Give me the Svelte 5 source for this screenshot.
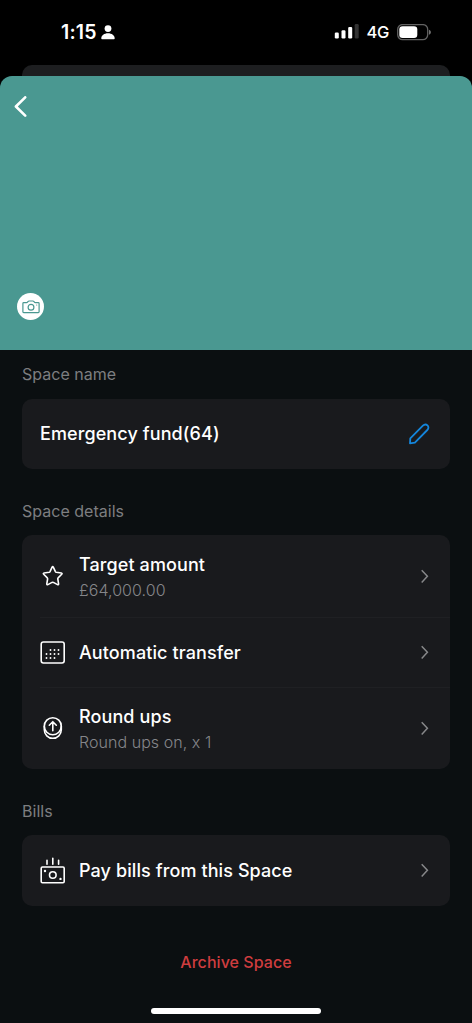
<script lang="ts">
    let spaceName = 'Emergency fund(64)';

    const details = [
        { icon: 'star', title: 'Target amount', subtitle: '£64,000.00' },
        { icon: 'calendar', title: 'Automatic transfer', subtitle: '' },
        { icon: 'coin', title: 'Round ups', subtitle: 'Round ups on, x 1' }
    ];

    const bills = [{ icon: 'bill', title: 'Pay bills from this Space', subtitle: '' }];

    const dots = [
        [10.5, 12], [14.5, 12], [18.5, 12],
        [6.5, 16], [10.5, 16], [14.5, 16], [18.5, 16],
        [6.5, 20], [10.5, 20], [14.5, 20]
    ];
</script>

{#snippet icon(name)}
    <svg class="icon" width="26" height="28" viewBox="0 0 26 28">
        {#if name === 'star'}
            <path d="M12.100 5.100Q12.700 4 13.300 5.100L15.400 9.600Q15.700 10.200 16.300 10.300L21.300 11Q22.600 11.300 21.700 12.300L18.100 15.900Q17.700 16.400 17.800 17L18.600 21.800Q18.700 23.200 17.500 22.600L13.400 20.400Q12.700 20.100 12 20.400L7.900 22.600Q6.700 23.200 6.800 21.800L7.600 17Q7.700 16.400 7.300 15.900L3.700 12.300Q2.800 11.300 4.100 11L9.100 10.300Q9.700 10.200 10 9.600Z" />
        {:else if name === 'calendar'}
            <rect x="1.200" y="4" width="23" height="21" rx="2.200" />
            {#each dots as [x, y]}
                <circle class="solid" cx={x} cy={y} r="0.95" />
            {/each}
        {:else if name === 'coin'}
            <circle cx="12.800" cy="12.200" r="8.500" />
            <path d="M4.300 12.200v3.600c0 4.700 3.800 8.500 8.500 8.500s8.500-3.800 8.500-8.500v-3.600" />
            <path d="M12.800 16.800V7.800M9.300 11.200 12.800 7.700l3.500 3.500" />
        {:else if name === 'bill'}
            <rect x="1.200" y="11" width="23" height="15.800" rx="1.200" />
            <circle cx="12.800" cy="19" r="3.300" />
            <circle class="solid" cx="5" cy="15" r="1.200" />
            <circle class="solid" cx="20.500" cy="22.900" r="1.200" />
            <path d="M7 4.300v3.900M12.800 2.200v6M18.600 4.300v3.900" />
        {/if}
    </svg>
{/snippet}

{#snippet row(item)}
    <button class="row {item.subtitle ? 'tall' : ''}">
        {@render icon(item.icon)}
        <div class="text">
            <span class="title">{item.title}</span>
            {#if item.subtitle}
                <span class="subtitle">{item.subtitle}</span>
            {/if}
        </div>
        <svg class="chevron" width="10" height="16" viewBox="0 0 10 16">
            <path d="M1.700 2.200 7.400 8.300 1.700 14.400" />
        </svg>
    </button>
{/snippet}

<div class="screen">
    <div class="status">
        <span class="time">1:15</span>
        <svg class="person" width="14" height="15" viewBox="0 0 14 15">
            <circle cx="7" cy="3.600" r="3.400" />
            <path d="M.3 13.200C.3 10.500 3.200 8.300 7 8.300s6.700 2.200 6.700 4.900c0 .6-.4 1-1 1H1.300c-.6 0-1-.4-1-1Z" />
        </svg>
        <div class="signals">
            <svg width="25" height="16" viewBox="0 0 25 16">
                <rect x=".8" y="8.500" width="4" height="6" rx="1.200" />
                <rect x="7.500" y="6.200" width="4" height="8.300" rx="1.200" />
                <rect x="14.200" y="2.900" width="4" height="11.600" rx="1.200" />
                <rect class="dim" x="20.700" y="0" width="4" height="14.500" rx="1.200" />
            </svg>
            <span class="network">4G</span>
            <svg width="35" height="17" viewBox="0 0 35 17">
                <rect class="shell" x=".7" y=".6" width="30" height="15" rx="4.800" />
                <rect x="2.300" y="2.200" width="18" height="11.800" rx="3.300" />
                <path class="tip" d="M32 5.700v5c1.200-.4 1.900-1.300 1.900-2.500S33.200 6.100 32 5.700Z" />
            </svg>
        </div>
    </div>

    <div class="behind"></div>

    <main class="sheet">
        <header class="hero">
            <button class="back" aria-label="Back">
                <svg width="14" height="22" viewBox="0 0 14 22">
                    <path d="M12.200 1.300 2.900 10.500l9.300 9.200" />
                </svg>
            </button>
            <button class="camera" aria-label="Change image">
                <svg width="18" height="14" viewBox="0 0 18 14">
                    <path d="M1.700 2.700H4.500Q5.200 2.700 5.700 1.900 6.300 1 7.200 1h3.500q.9 0 1.500.9.500.8 1.200.8h2.900c.5 0 .8.3.8.8v8.300c0 .5-.3.800-.8.800H1.700c-.5 0-.8-.3-.8-.8V3.500c0-.5.3-.8.8-.8Z" />
                    <circle cx="9" cy="7.200" r="2.900" />
                    <circle class="lamp" cx="14.700" cy="5" r=".6" />
                </svg>
            </button>
        </header>

        <h2>Space name</h2>
        <section class="card name">
            <span class="title">{spaceName}</span>
            <svg class="pencil" width="22" height="22" viewBox="0 0 22 22">
                <path d="M2 20.300 2.300 15.300 14.900 2.700C16.300 1.300 18.200 1.200 19.500 2.400s1.200 3.200-.2 4.600L6.900 19.600Z" />
            </svg>
        </section>

        <h2>Space details</h2>
        <section class="card">
            {#each details as item}
                {@render row(item)}
            {/each}
        </section>

        <h2>Bills</h2>
        <section class="card">
            {#each bills as item}
                {@render row(item)}
            {/each}
        </section>

        <button class="archive">Archive Space</button>
        <div class="home"></div>
    </main>
</div>

<style>
    :global(body) {
        margin: 0;
        background-color: #000;
    }

    button {
        margin: 0;
        padding: 0;
        border: none;
        background: none;
        font: inherit;
        color: inherit;
        text-align: left;
    }

    svg {
        display: block;
        flex-shrink: 0;
    }

    .screen {
        display: flex;
        flex-direction: column;
        width: 472px;
        height: 1023px;
        overflow: hidden;
        background-color: #000;
        font-family: Inter, "Liberation Sans", sans-serif;
        color: #fff;
    }

    .status {
        display: flex;
        align-items: center;
        box-sizing: border-box;
        height: 64px;
        margin-bottom: 1px;
        padding: 0 40px 0 61px;
        fill: #fff;
    }

    .time {
        font-size: 19.5px;
        font-weight: 600;
        letter-spacing: 0.2px;
    }

    .person {
        margin-left: 4.5px;
    }

    .signals {
        display: flex;
        align-items: center;
        margin-left: auto;
    }

    .network {
        margin: 0 8px 0 7px;
        font-size: 16.5px;
        font-weight: 500;
        letter-spacing: -0.3px;
    }

    .dim {
        fill: #323232;
    }

    .shell {
        fill: none;
        stroke: #626262;
        stroke-width: 1.3;
    }

    .tip {
        fill: #727272;
    }

    .behind {
        flex-shrink: 0;
        height: 11px;
        margin: 0 22px;
        border-radius: 10px 10px 0 0;
        background-color: #1d1e20;
    }

    .sheet {
        display: flex;
        flex-direction: column;
        flex: 1;
        border-radius: 12px 12px 0 0;
        background-color: #0b0f11;
        overflow: hidden;
    }

    .hero {
        display: flex;
        flex-direction: column;
        align-items: flex-start;
        justify-content: space-between;
        box-sizing: border-box;
        height: 274px;
        padding: 20px 0 30px 13px;
        background-color: #4a9891;
    }

    .back path {
        fill: none;
        stroke: #fff;
        stroke-width: 2.6;
        stroke-linecap: round;
        stroke-linejoin: round;
    }

    .camera {
        display: flex;
        align-items: center;
        justify-content: center;
        width: 27px;
        height: 27px;
        margin-left: 4px;
        border-radius: 50%;
        background-color: #fff;
        fill: none;
        stroke: #4a9891;
        stroke-width: 1.2;
    }

    .lamp {
        fill: #4a9891;
        stroke: none;
    }

    h2 {
        margin: 0;
        padding: 0 22px;
        height: 49px;
        line-height: 49px;
        font-size: 16px;
        font-weight: 400;
        letter-spacing: 0.02px;
        color: #7d7e80;
    }

    .card + h2 {
        height: 66px;
        line-height: 84px;
    }

    .card {
        margin: 0 22px;
        border-radius: 10px;
        background-color: #191a1d;
    }

    .name {
        display: flex;
        align-items: center;
        justify-content: space-between;
        height: 70px;
        padding: 0 20px 0 18px;
    }

    .title {
        font-size: 18px;
        font-weight: 500;
        line-height: 24px;
        letter-spacing: 0.1px;
    }

    .subtitle {
        font-size: 16px;
        font-weight: 300;
        line-height: 26px;
        letter-spacing: 0.05px;
        color: #85868a;
    }

    .pencil {
        fill: none;
        stroke: #1486dc;
        stroke-width: 1.8;
        stroke-linejoin: round;
    }

    .row {
        position: relative;
        display: flex;
        align-items: center;
        width: 100%;
        height: 70.5px;
        padding: 0 20px 0 18px;
    }

    .row.tall {
        height: 81.75px;
    }

    .row + .row::before {
        content: '';
        position: absolute;
        top: 0;
        left: 18px;
        right: 0;
        height: 1px;
        background-color: #1f2023;
    }

    .icon {
        fill: none;
        stroke: #fff;
        stroke-width: 1.6;
        stroke-linecap: round;
        stroke-linejoin: round;
    }

    .solid {
        fill: #fff;
        stroke: none;
    }

    .text {
        display: flex;
        flex-direction: column;
        flex: 1;
        margin-left: 13px;
        padding-top: 2px;
    }

    .tall .text {
        padding-top: 3.5px;
    }

    .chevron {
        fill: none;
        stroke: #87888a;
        stroke-width: 1.5;
    }

    .archive {
        align-self: center;
        margin-top: 43px;
        font-size: 16px;
        font-weight: 500;
        line-height: 26px;
        letter-spacing: 0.05px;
        color: #cf3d3f;
    }

    .home {
        align-self: center;
        width: 170px;
        height: 6px;
        margin: auto 0 9px;
        border-radius: 3px;
        background-color: #fff;
    }
</style>
